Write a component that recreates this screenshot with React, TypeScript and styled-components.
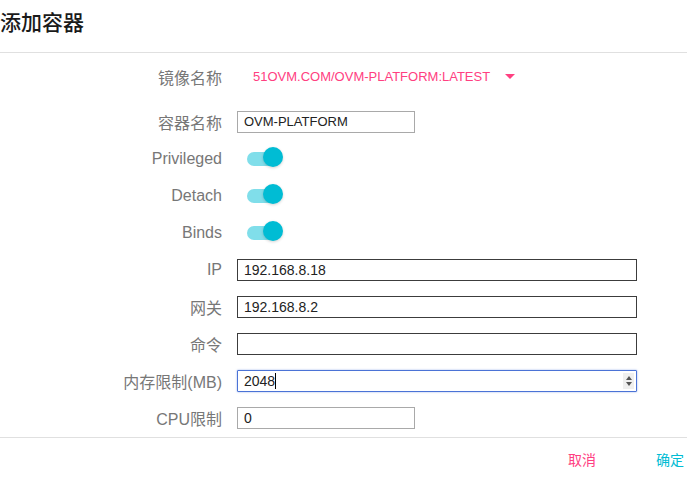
import React from "react";
import styled, { createGlobalStyle } from "styled-components";

const Global = createGlobalStyle`
  html, body { margin: 0; padding: 0; background: #fff; }
  body { font-family: "Liberation Sans", "Noto Sans CJK SC", sans-serif; }
  * { box-sizing: border-box; }
`;

const Dialog = styled.div`
  width: 687px;
  height: 479px;
  display: flex;
  flex-direction: column;
  background: #fff;
  overflow: hidden;
`;

const Header = styled.div`
  height: 53px;
  border-bottom: 1px solid #e0e0e0;
`;

const Title = styled.h3`
  margin: 0;
  font-family: "Noto Sans CJK SC", sans-serif;
  font-weight: 500;
  font-size: 21px;
  line-height: 42px;
  color: #1a1a1a;
`;

const Form = styled.div`
  display: flex;
  flex-direction: column;
  padding: 5px 0 1px;
  border-bottom: 1px solid #e0e0e0;
`;

const Row = styled.div<{ $first?: boolean }>`
  display: grid;
  grid-template-columns: 222px 1fr;
  column-gap: 15px;
  align-items: center;
  height: 37px;
  margin-bottom: ${(p) => (p.$first ? "8px" : "0")};
`;

const Label = styled.label`
  text-align: right;
  font-family: "Liberation Sans", "Noto Sans CJK SC", sans-serif;
  font-size: 16px;
  color: #777;
  white-space: nowrap;
`;

const Field = styled.div`
  display: flex;
  align-items: center;
`;

const SelectValue = styled.div`
  display: flex;
  align-items: center;
  gap: 15px;
  padding-left: 16px;
  font-family: "Liberation Sans", sans-serif;
  font-size: 13px;
  color: #ff4081;
`;

const Caret = styled.span`
  width: 0;
  height: 0;
  border-left: 5px solid transparent;
  border-right: 5px solid transparent;
  border-top: 5px solid #ff4081;
`;

const TextInput = styled.input<{ $wide?: boolean; $dark?: boolean; $size?: number }>`
  width: ${(p) => (p.$wide ? "400px" : "178px")};
  height: 22px;
  padding: 0 6px;
  border: 1px solid ${(p) => (p.$dark ? "#3c3c3c" : "#a9a9a9")};
  border-radius: 0;
  outline: none;
  font-family: "Liberation Sans", sans-serif;
  font-size: ${(p) => p.$size ?? 13}px;
  color: #222;
  background: #fff;
`;

const NumberWrap = styled.div`
  position: relative;
  width: 400px;
  height: 22px;
`;

const NumberInput = styled.input`
  width: 100%;
  height: 100%;
  padding: 0 6px;
  border: 1px solid #4b73d6;
  box-shadow: 0 0 2px rgba(75, 115, 214, 0.6);
  border-radius: 1px;
  outline: none;
  font-family: "Liberation Sans", sans-serif;
  font-size: 14px;
  color: #222;
`;

const TextCaret = styled.span`
  position: absolute;
  left: 38px;
  top: 3px;
  width: 1px;
  height: 16px;
  background: #000;
`;

const Spinner = styled.div`
  position: absolute;
  right: 3px;
  top: 3px;
  width: 11px;
  height: 16px;
  background: #efefef;
  display: flex;
  flex-direction: column;
  align-items: center;
  justify-content: center;
  gap: 2px;
`;

const Arrow = styled.span<{ $up?: boolean }>`
  width: 0;
  height: 0;
  border-left: 3.5px solid transparent;
  border-right: 3.5px solid transparent;
  ${(p) =>
    p.$up ? "border-bottom: 4px solid #555;" : "border-top: 4px solid #555;"}
`;

const Switch = styled.div`
  position: relative;
  margin-left: 10px;
  width: 36px;
  height: 20px;
  display: flex;
  align-items: center;
`;

const Track = styled.div`
  width: 34px;
  height: 14px;
  border-radius: 7px;
  background: #80deea;
`;

const Thumb = styled.div`
  position: absolute;
  right: 0;
  top: -2px;
  width: 20px;
  height: 20px;
  border-radius: 50%;
  background: #00bcd4;
  box-shadow: 0 1px 3px rgba(0, 0, 0, 0.18);
`;

const Footer = styled.div`
  flex: 1;
  display: flex;
  justify-content: flex-end;
  align-items: center;
  gap: 60px;
  padding: 0 3px 0 0;
`;

const Action = styled.button<{ $color: string }>`
  border: none;
  background: none;
  padding: 0;
  margin-top: 1px;
  font-family: "Noto Sans CJK SC", sans-serif;
  font-size: 14px;
  color: ${(p) => p.$color};
  cursor: pointer;
`;

const Toggle = () => (
  <Switch>
    <Track />
    <Thumb />
  </Switch>
);

export default function App() {
  return (
    <>
      <Global />
      <Dialog>
        <Header>
          <Title>添加容器</Title>
        </Header>
        <Form>
          <Row $first>
            <Label>镜像名称</Label>
            <Field>
              <SelectValue>
                51OVM.COM/OVM-PLATFORM:LATEST
                <Caret />
              </SelectValue>
            </Field>
          </Row>
          <Row>
            <Label>容器名称</Label>
            <Field>
              <TextInput defaultValue="OVM-PLATFORM" />
            </Field>
          </Row>
          <Row>
            <Label>Privileged</Label>
            <Field>
              <Toggle />
            </Field>
          </Row>
          <Row>
            <Label>Detach</Label>
            <Field>
              <Toggle />
            </Field>
          </Row>
          <Row>
            <Label>Binds</Label>
            <Field>
              <Toggle />
            </Field>
          </Row>
          <Row>
            <Label>IP</Label>
            <Field>
              <TextInput $wide $dark $size={14} defaultValue="192.168.8.18" />
            </Field>
          </Row>
          <Row>
            <Label>网关</Label>
            <Field>
              <TextInput $wide $dark $size={14} defaultValue="192.168.8.2" />
            </Field>
          </Row>
          <Row>
            <Label>命令</Label>
            <Field>
              <TextInput $wide $dark $size={14} defaultValue="" />
            </Field>
          </Row>
          <Row>
            <Label>内存限制(MB)</Label>
            <Field>
              <NumberWrap>
                <NumberInput defaultValue="2048" />
                <TextCaret />
                <Spinner>
                  <Arrow $up />
                  <Arrow />
                </Spinner>
              </NumberWrap>
            </Field>
          </Row>
          <Row>
            <Label>CPU限制</Label>
            <Field>
              <TextInput $size={14} defaultValue="0" />
            </Field>
          </Row>
        </Form>
        <Footer>
          <Action $color="#ff4081">取消</Action>
          <Action $color="#00bcd4">确定</Action>
        </Footer>
      </Dialog>
    </>
  );
}
